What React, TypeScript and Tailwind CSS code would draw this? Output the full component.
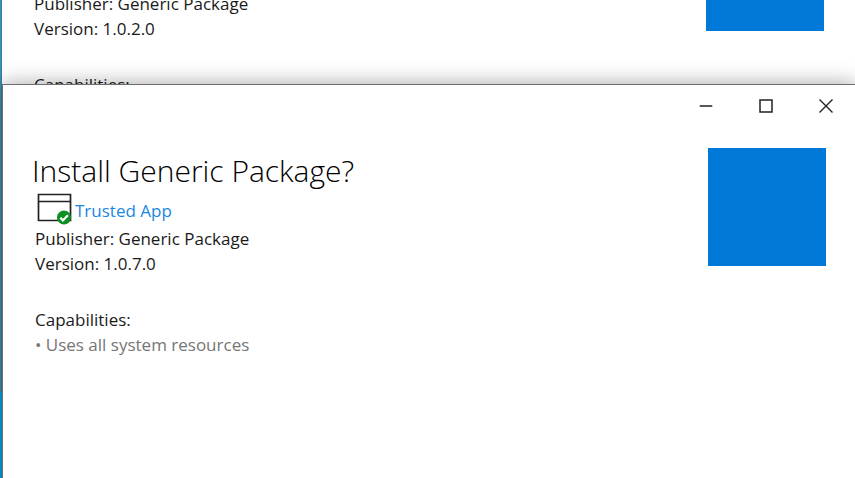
import { Minus } from "lucide-react";

type InstallerProps = {
  version: string;
  className: string;
};

function TrustedIcon() {
  return (
    <svg className="h-8 w-9" viewBox="0 0 36 32" fill="none" aria-hidden="true">
      <path d="M1.5 1.5h32v26h-32z M1.5 8.5h32" stroke="#222222" strokeWidth="1.7" />
      <circle cx="27" cy="24.5" r="7" fill="#0c9024" />
      <path d="M23.3 24.8l2.6 2.6 5-5.2" stroke="#ffffff" strokeWidth="2.2" />
    </svg>
  );
}

function Installer({ version, className }: InstallerProps) {
  return (
    <section
      className={`absolute flex flex-col border border-[#6e6e6e] bg-white ${className}`}
      aria-label={`Install Generic Package ${version}`}
    >
      <header className="flex h-[42px] justify-end text-[#222222]">
        <button type="button" aria-label="Minimize" className="flex w-[60px] items-center justify-center">
          <Minus size={20} strokeWidth={1.6} />
        </button>
        <button type="button" aria-label="Maximize" className="flex w-[60px] items-center justify-center">
          <svg className="size-[14px]" viewBox="0 0 14 14" fill="none" aria-hidden="true">
            <path d="M1 1h12v12H1z" stroke="currentColor" strokeWidth="1.5" />
          </svg>
        </button>
        <button type="button" aria-label="Close" className="flex w-[60px] items-center justify-center">
          <svg className="size-[14px]" viewBox="0 0 14 14" fill="none" aria-hidden="true">
            <path d="M.5 .5l13 13M13.5 .5l-13 13" stroke="currentColor" strokeWidth="1.4" />
          </svg>
        </button>
      </header>
      <main className="flex items-start justify-between pt-[21px] pr-[30px] pl-8">
        <div className="text-[17px] leading-[25px]">
          <h1 className="-ml-[3px] pt-px text-[30px] leading-[44px] font-light text-black">Install Generic Package?</h1>
          <div className="flex h-[33px] items-start gap-0.5 pl-0.5">
            <TrustedIcon />
            <a href="#trusted" className="pt-[5px] text-[#1b87e0]">Trusted App</a>
          </div>
          <p>Publisher: Generic Package</p>
          <p>Version: {version}</p>
          <h2 className="mt-[31px]">Capabilities:</h2>
          <ul className="text-[#767676]">
            <li>• Uses all system resources</li>
          </ul>
        </div>
        <div className="size-[118px] shrink-0 bg-[#0078d7]" />
      </main>
    </section>
  );
}

export default function App() {
  return (
    <div className="relative h-screen overflow-hidden bg-[#0aa0e6] font-['Open_Sans','Noto_Sans',sans-serif] text-[#1a1a1a]">
      <Installer version="1.0.2.0" className="-top-[151px] right-0 left-px h-[543px] border-r-white" />
      <Installer
        version="1.0.7.0"
        className="top-[84px] right-[-2px] left-0.5 h-[543px] shadow-[0_0_20px_rgba(0,0,0,0.35)]"
      />
    </div>
  );
}
